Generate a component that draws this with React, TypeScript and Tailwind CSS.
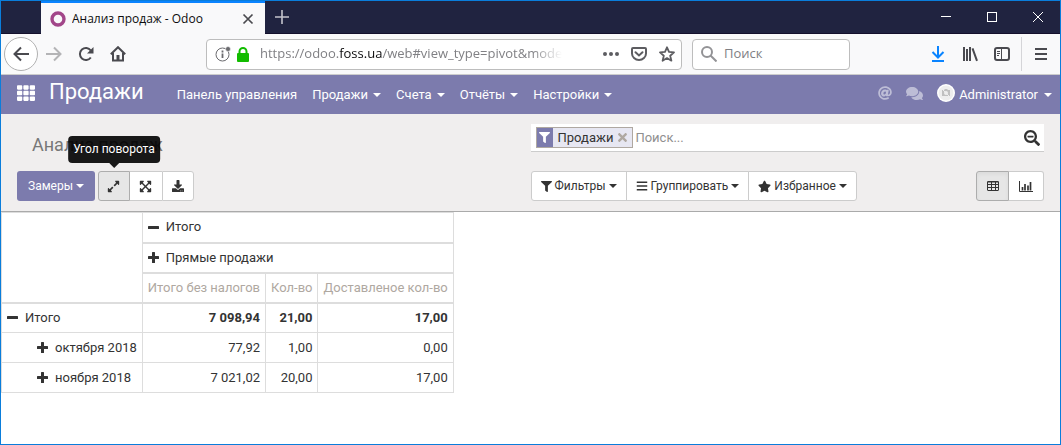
import type { ReactNode } from "react";
import {
  FaAt,
  FaBars,
  FaComments,
  FaDownload,
  FaExpandAlt,
  FaExpandArrowsAlt,
  FaFilter,
  FaSearchMinus,
  FaStar,
  FaTh,
  FaTimes,
} from "react-icons/fa";

const menuItems = [
  { label: "Панель управления", dropdown: false },
  { label: "Продажи", dropdown: true },
  { label: "Счета", dropdown: true },
  { label: "Отчёты", dropdown: true },
  { label: "Настройки", dropdown: true },
];

const measures = ["Итого без налогов", "Кол-во", "Доставленое кол-во"];

const rows = [
  { label: "Итого", open: true, values: ["7 098,94", "21,00", "17,00"] },
  { label: "октября 2018", open: false, values: ["77,92", "1,00", "0,00"] },
  { label: "ноября 2018", open: false, values: ["7 021,02", "20,00", "17,00"] },
];

function Caret() {
  return (
    <svg width="8" height="4" viewBox="0 0 8 4" fill="currentColor">
      <path d="M0 0h8L4 4z" />
    </svg>
  );
}

function ToggleIcon({ open }: { open: boolean }) {
  return (
    <svg width="11" height="11" viewBox="0 0 11 11" fill="currentColor" className="shrink-0">
      <rect x="0" y="4" width="11" height="3" rx="0.5" />
      {!open && <rect x="4" y="0" width="3" height="11" rx="0.5" />}
    </svg>
  );
}

function TabBar() {
  return (
    <div className="flex h-[33px] border-b border-[#14102c] bg-[#202340] pl-10">
      <div className="flex h-[33px] w-56 items-center border-t-2 border-[#0a84ff] bg-[#f9f9fa] pl-[9px] pr-[11px]">
        <svg width="16" height="16" viewBox="0 0 16 16" className="mr-1.5">
          <circle cx="8" cy="8" r="6" fill="none" stroke="#a24689" strokeWidth="3.4" />
        </svg>
        <span className="flex-1 truncate text-xs text-[#0c0c0d]">Анализ продаж - Odoo</span>
        <button type="button" aria-label="Закрыть вкладку">
          <svg width="12" height="12" viewBox="0 0 12 12" stroke="#4a4a4f" strokeWidth="1.7">
            <path d="M1.5 1.5l9 9M10.5 1.5l-9 9" />
          </svg>
        </button>
      </div>
      <button type="button" aria-label="Новая вкладка" className="ml-2.5">
        <svg width="14" height="14" viewBox="0 0 14 14" stroke="#c4c4cc" strokeWidth="1.6">
          <path d="M7 0v14M0 7h14" />
        </svg>
      </button>
      <div className="ml-auto flex items-center gap-9 pr-[17px] text-white">
        <button type="button" aria-label="Свернуть">
          <svg width="10" height="10" viewBox="0 0 10 10" stroke="currentColor">
            <path d="M0 4.5h10" />
          </svg>
        </button>
        <button type="button" aria-label="Развернуть">
          <svg width="10" height="10" viewBox="0 0 10 10" fill="none" stroke="currentColor">
            <rect x="0.5" y="0.5" width="9" height="9" />
          </svg>
        </button>
        <button type="button" aria-label="Закрыть">
          <svg width="10" height="10" viewBox="0 0 10 10" stroke="currentColor">
            <path d="M0 0l10 10M10 0L0 10" />
          </svg>
        </button>
      </div>
    </div>
  );
}

function BrowserToolbar() {
  return (
    <div className="flex h-[41px] items-center border-b border-[#cccccc] bg-[#f9f9fa] text-[#4a4a4f]">
      <button
        type="button"
        aria-label="Назад"
        className="ml-[3px] flex size-[34px] items-center justify-center rounded-full border border-[#b1b1b1] bg-white"
      >
        <svg width="16" height="16" viewBox="0 0 16 16" fill="none" stroke="currentColor" strokeWidth="2">
          <path d="M1 8h15M8 1.5L1.5 8 8 14.5" />
        </svg>
      </button>
      <button type="button" aria-label="Вперёд" className="ml-2 text-[#b4b4b6]">
        <svg width="16" height="16" viewBox="0 0 16 16" fill="none" stroke="currentColor" strokeWidth="2">
          <path d="M0 8h15M8 1.5L14.5 8 8 14.5" />
        </svg>
      </button>
      <button type="button" aria-label="Обновить" className="ml-4">
        <svg width="16" height="16" viewBox="0 0 16 16" fill="none" stroke="currentColor" strokeWidth="2">
          <path d="M12.8 11.5A6 6 0 1 1 12.8 4.5" />
          <path d="M15.5 1v6.5H9z" fill="currentColor" stroke="none" />
        </svg>
      </button>
      <button type="button" aria-label="Домой" className="ml-4">
        <svg width="16" height="16" viewBox="0 0 16 16" fill="none" stroke="currentColor" strokeWidth="2">
          <path d="M0.8 8.3L8 1.2l7.2 7.1" />
          <path d="M3 7v7.5h10V7" />
          <path d="M8 14V9" strokeWidth="3" />
        </svg>
      </button>

      <div className="ml-20 flex h-[31px] flex-1 items-center rounded-sm border border-[#bdbdbd] bg-white pl-2 pr-1.5">
        <svg width="16" height="16" viewBox="0 0 16 16" fill="none" stroke="#6a6a6e" className="shrink-0">
          <circle cx="7.5" cy="8.5" r="6.5" />
          <path d="M7.5 7.5V12M7.5 4.5v2" strokeWidth="1.8" />
          <circle cx="13" cy="3" r="2.5" fill="#6a6a6e" stroke="#fff" strokeWidth="0.6" />
        </svg>
        <svg width="12" height="15" viewBox="0 0 12 15" className="ml-1.5 shrink-0">
          <rect x="0" y="6" width="12" height="9" rx="1" fill="#12bc00" />
          <path d="M2.5 7V4.5a3.5 3.5 0 0 1 7 0V7" fill="none" stroke="#12bc00" strokeWidth="2" />
        </svg>
        <div className="ml-[11px] whitespace-nowrap text-[13px] text-[#808084] mask-r-from-90%">
          https://odoo.<span className="text-[#0c0c0d]">foss.ua</span>
          /web#view_type=pivot&amp;mode
        </div>
        <div className="ml-auto flex items-center gap-3">
          <button type="button" aria-label="Действия на странице">
            <svg width="16" height="16" viewBox="0 0 16 16" fill="#5d5d61">
              <circle cx="2" cy="8" r="2" />
              <circle cx="8" cy="8" r="2" />
              <circle cx="14" cy="8" r="2" />
            </svg>
          </button>
          <button type="button" aria-label="Сохранить в Pocket">
            <svg width="16" height="16" viewBox="0 0 16 16" fill="none" stroke="#5d5d61" strokeWidth="2">
              <path d="M2 2h12a1 1 0 0 1 1 1v4.5a7 6.5 0 0 1-14 0V3a1 1 0 0 1 1-1z" />
              <path d="M4.5 6.2L8 9.500l3.5-3.3" strokeLinecap="round" />
            </svg>
          </button>
          <button type="button" aria-label="Добавить закладку">
            <svg
              width="16"
              height="16"
              viewBox="0 0 16 16"
              fill="none"
              stroke="#5d5d61"
              strokeWidth="1.8"
              strokeLinejoin="round"
            >
              <path d="M8 1.3l2 4.6 5 .5-3.8 3.3 1.2 5L8 12.1l-4.4 2.6 1.2-5L1 6.4l5-.5z" />
            </svg>
          </button>
        </div>
      </div>

      <label className="ml-2.5 flex h-[31px] w-[158px] items-center rounded-sm border border-[#bdbdbd] bg-white pl-2">
        <svg width="16" height="16" viewBox="0 0 16 16" fill="none" stroke="#939396" strokeWidth="2" className="shrink-0">
          <circle cx="6" cy="6" r="5" />
          <path d="M9.5 9.5l6 6" />
        </svg>
        <input
          type="search"
          aria-label="Поиск в интернете"
          placeholder="Поиск"
          className="ml-[7px] w-full min-w-0 text-[13px] outline-none placeholder:text-[#808084]"
        />
      </label>

      <div className="ml-20 flex h-full items-center">
        <button type="button" aria-label="Загрузки" className="text-[#0a84ff]">
          <svg width="16" height="16" viewBox="0 0 16 16" fill="none" stroke="currentColor" strokeWidth="2">
            <path d="M8 0v11M2.5 6L8 11.5 13.5 6M2 15h12" />
          </svg>
        </button>
        <button type="button" aria-label="Библиотека" className="ml-4">
          <svg width="16" height="16" viewBox="0 0 16 16" fill="none" stroke="currentColor" strokeWidth="2">
            <path d="M2 1v14M5 3v12M8 1v14M10.500 2.3l4.5 12.5" />
          </svg>
        </button>
        <button type="button" aria-label="Боковая панель" className="ml-4">
          <svg width="16" height="16" viewBox="0 0 16 16" fill="none" stroke="currentColor">
            <rect x="1" y="2" width="14" height="12" rx="2" strokeWidth="2" />
            <path d="M7.5 2v12" />
            <path d="M3 5.5h3M3 7.5h3M3 9.5h2" />
          </svg>
        </button>
        <div className="ml-[11px] h-[34px] w-px bg-[#d5d5d8]" />
        <button type="button" aria-label="Меню" className="mx-3">
          <svg width="14" height="14" viewBox="0 0 14 14" stroke="currentColor" strokeWidth="2">
            <path d="M1 2h12M1 7h12M1 12h12" />
          </svg>
        </button>
      </div>
    </div>
  );
}

function NavBar() {
  return (
    <nav className="flex h-[39px] items-center bg-[#7c7bad] pl-4 pr-2 text-[13px] text-white">
      <button type="button" aria-label="Приложения" className="mb-1">
        <FaTh size={18} />
      </button>
      <a href="#sales" className="mb-1.5 ml-3.5 text-[22px] leading-7">
        Продажи
      </a>
      <ul className="ml-[33px] flex items-center gap-[15px]">
        {menuItems.map((item) => (
          <li key={item.label}>
            <a href="#menu" className="flex items-center gap-[5px]">
              {item.label}
              {item.dropdown && <Caret />}
            </a>
          </li>
        ))}
      </ul>
      <div className="ml-auto flex items-center">
        <button type="button" aria-label="Упоминания" className="mb-1 text-[#bdbdd6]">
          <FaAt size={14} />
        </button>
        <button type="button" aria-label="Беседы" className="mb-0.5 ml-3.5 text-[#bdbdd6]">
          <FaComments size={17} />
        </button>
        <button type="button" className="ml-3.5 flex items-center">
          <svg width="18" height="18" viewBox="0 0 18 18" className="mb-1 mr-1">
            <circle cx="9" cy="9" r="9" fill="#fff" />
            <circle cx="9" cy="9" r="7.5" fill="#eeeeee" />
            <path d="M5 6h2l1-1h2l1 1h2v6H5z" fill="#c0c0c0" />
            <circle cx="9" cy="9" r="2" fill="#eeeeee" />
            <path d="M5 5l8 8" stroke="#eeeeee" />
          </svg>
          <span className="mr-1.5">Administrator</span>
          <Caret />
        </button>
      </div>
    </nav>
  );
}

function FilterButton({ icon, label }: { icon: ReactNode; label: string }) {
  return (
    <button
      type="button"
      className="-ml-px flex h-[30px] items-center gap-[3px] border border-[#cccccc] bg-white px-[9px] text-xs first:ml-0 first:rounded-l-[3px] last:rounded-r-[3px]"
    >
      {icon}
      {label}
      <Caret />
    </button>
  );
}

function ControlPanel() {
  return (
    <div className="grid grid-cols-2 border-b border-[#aaaaaa] bg-[#f0eeee] py-2.5 text-[#333333]">
      <h1 className="pl-[31px] pt-[7px] text-lg leading-7 text-[#777777]">Анализ продаж</h1>
      <div className="mr-4 flex h-7 items-center border-b border-[#cccccc] bg-white pl-[5px] pr-1">
        <div className="flex h-[21px] items-center border border-[#afa8a1] bg-[#e7e7f2] text-[13px]">
          <span className="flex h-full w-4 items-center justify-center bg-[#7c7bad] text-white">
            <FaFilter size={11} />
          </span>
          <span className="ml-[5px]">Продажи</span>
          <button type="button" aria-label="Удалить фильтр" className="mx-[3px] text-[#afa8a1]">
            <FaTimes size={13} />
          </button>
        </div>
        <input
          type="text"
          aria-label="Поиск"
          placeholder="Поиск..."
          className="ml-0.5 min-w-0 flex-1 text-[13px] outline-none placeholder:text-[#8f8f8f]"
        />
        <button type="button" aria-label="Параметры поиска">
          <FaSearchMinus size={16} />
        </button>
      </div>

      <div className="mt-3 flex gap-[3px] pl-4">
        <button
          type="button"
          className="flex h-[30px] items-center gap-[3px] rounded-[3px] bg-[#7c7bad] px-[11px] text-xs text-white"
        >
          Замеры
          <Caret />
        </button>
        <div className="flex">
          <button
            type="button"
            aria-describedby="flip-tip"
            className="relative flex h-[30px] w-8 items-center justify-center rounded-l-[3px] border border-[#adadad] bg-[#e6e6e6]"
          >
            <FaExpandAlt size={13} />
            <span
              id="flip-tip"
              role="tooltip"
              className="absolute bottom-full left-1/2 mb-[9px] -translate-x-1/2 whitespace-nowrap rounded bg-black/90 px-[5px] py-[5px] text-xs leading-[17px] text-white"
            >
              Угол поворота
              <svg
                width="10"
                height="5"
                viewBox="0 0 10 5"
                fill="#000"
                className="absolute left-1/2 top-full -translate-x-1/2"
              >
                <path d="M0 0h10L5 5z" fillOpacity="0.9" />
              </svg>
            </span>
          </button>
          <button
            type="button"
            aria-label="Развернуть всё"
            className="flex h-[30px] w-8 items-center justify-center border-y border-[#cccccc] bg-white"
          >
            <FaExpandArrowsAlt size={13} />
          </button>
          <button
            type="button"
            aria-label="Скачать"
            className="flex h-[30px] w-8 items-center justify-center rounded-r-[3px] border border-[#cccccc] bg-white"
          >
            <FaDownload size={12} />
          </button>
        </div>
      </div>

      <div className="mr-4 mt-3 flex justify-between">
        <div className="flex">
          <FilterButton icon={<FaFilter size={11} />} label="Фильтры" />
          <FilterButton icon={<FaBars size={12} />} label="Группировать" />
          <FilterButton icon={<FaStar size={13} />} label="Избранное" />
        </div>
        <div className="flex">
          <button
            type="button"
            aria-label="Сводная таблица"
            className="flex h-[30px] w-[33px] items-center justify-center rounded-l-[3px] border border-[#adadad] bg-[#e6e6e6] inset-shadow-sm"
          >
            <svg width="12" height="10" viewBox="0 0 12 10" fill="none" stroke="currentColor">
              <rect x="0.5" y="0.5" width="11" height="9" rx="0.5" />
              <path d="M0.5 1h11M0 3.5h12M0 6.5h12M4.5 1v9M8.5 1v9" />
            </svg>
          </button>
          <button
            type="button"
            aria-label="График"
            className="flex h-[30px] w-[35px] items-center justify-center rounded-r-[3px] border border-l-0 border-[#cccccc] bg-white"
          >
            <svg width="14" height="11" viewBox="0 0 14 11" fill="none" stroke="currentColor">
              <path d="M0.5 0v10.5H14" />
              <path d="M3.5 6v3.5M6 3v6.5M9 4.5v5M11.5 1v8.5" strokeWidth="1.7" />
            </svg>
          </button>
        </div>
      </div>
    </div>
  );
}

function PivotTable() {
  return (
    <table className="border-collapse text-[13px] leading-5 text-[#333333]">
      <thead>
        <tr className="h-[30px]">
          <td rowSpan={3} className="border border-b-2 border-[#dddddd]" />
          <th colSpan={3} className="border border-b-2 border-[#dddddd] px-[5px] font-normal">
            <button type="button" className="flex items-center gap-[7px]">
              <ToggleIcon open />
              Итого
            </button>
          </th>
        </tr>
        <tr className="h-[30px]">
          <th colSpan={3} className="border border-b-2 border-[#dddddd] px-[5px] font-normal">
            <button type="button" className="flex items-center gap-[7px]">
              <ToggleIcon open={false} />
              Прямые продажи
            </button>
          </th>
        </tr>
        <tr className="h-[30px]">
          {measures.map((measure) => (
            <th
              key={measure}
              className="whitespace-nowrap border border-b-2 border-[#dddddd] px-[5px] text-right font-normal text-[#afa8a1]"
            >
              {measure}
            </th>
          ))}
        </tr>
      </thead>
      <tbody>
        {rows.map((row) => (
          <tr key={row.label} className="h-[30px]">
            <th
              scope="row"
              className={`border border-[#dddddd] pr-[5px] font-normal ${row.open ? "pl-[5px]" : "pl-[35px]"}`}
            >
              <button type="button" className="flex items-center gap-[7px] whitespace-nowrap">
                <ToggleIcon open={row.open} />
                {row.label}
              </button>
            </th>
            {row.values.map((value, i) => (
              <td
                key={measures[i]}
                className={`border border-[#dddddd] px-[5px] text-right ${row.open ? "font-bold" : ""}`}
              >
                {value}
              </td>
            ))}
          </tr>
        ))}
      </tbody>
    </table>
  );
}

export default function App() {
  return (
    <div className="min-h-screen border border-[#0a7ddb] bg-white font-['Roboto',sans-serif]">
      <header className="font-['Open_Sans','Noto_Sans',sans-serif]">
        <TabBar />
        <BrowserToolbar />
      </header>
      <NavBar />
      <ControlPanel />
      <PivotTable />
    </div>
  );
}
